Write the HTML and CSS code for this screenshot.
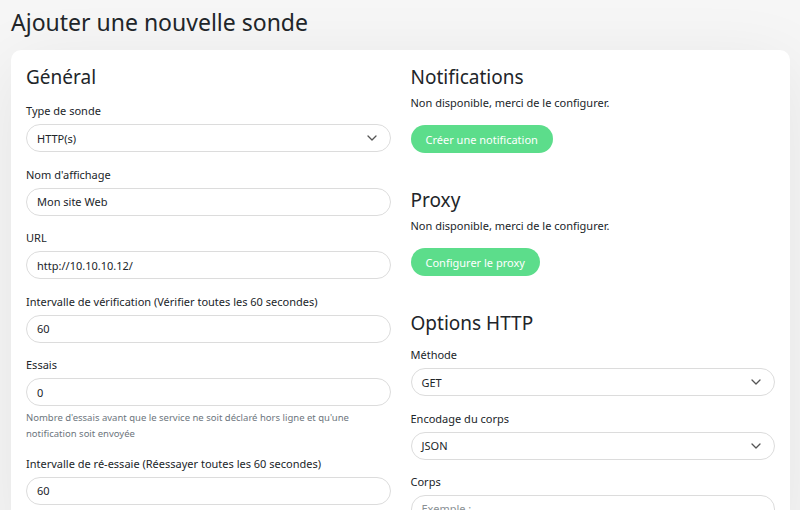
FILE: index.html
```html
<!DOCTYPE html>
<html lang="fr">
<head>
<meta charset="utf-8">
<title>Ajouter une nouvelle sonde</title>
<link rel="stylesheet" href="styles.css">
</head>
<body>
<div class="page">
  <h1 class="title">Ajouter une nouvelle sonde</h1>
  <div class="card">
    <div class="col">
      <h2 class="section">Général</h2>
      <div class="field">
        <label class="label">Type de sonde</label>
        <div class="select"><span>HTTP(s)</span><svg class="chev" width="10" height="6" viewBox="0 0 10 6"><path d="M1 1l4 4 4-4" fill="none" stroke="#555" stroke-width="1.3" stroke-linecap="round" stroke-linejoin="round"/></svg></div>
      </div>
      <div class="field">
        <label class="label">Nom d'affichage</label>
        <div class="input">Mon site Web</div>
      </div>
      <div class="field">
        <label class="label">URL</label>
        <div class="input">http://10.10.10.12/</div>
      </div>
      <div class="field">
        <label class="label">Intervalle de vérification (Vérifier toutes les 60 secondes)</label>
        <div class="input">60</div>
      </div>
      <div class="field">
        <label class="label">Essais</label>
        <div class="input">0</div>
        <div class="help">Nombre d'essais avant que le service ne soit déclaré hors ligne et qu'une notification soit envoyée</div>
      </div>
      <div class="field">
        <label class="label">Intervalle de ré-essaie (Réessayer toutes les 60 secondes)</label>
        <div class="input">60</div>
      </div>
    </div>
    <div class="col">
      <h2 class="section tight">Notifications</h2>
      <p class="note">Non disponible, merci de le configurer.</p>
      <button class="btn">Créer une notification</button>
      <h2 class="section spaced">Proxy</h2>
      <p class="note">Non disponible, merci de le configurer.</p>
      <button class="btn">Configurer le proxy</button>
      <h2 class="section spaced last">Options HTTP</h2>
      <div class="field">
        <label class="label">Méthode</label>
        <div class="select"><span>GET</span><svg class="chev" width="10" height="6" viewBox="0 0 10 6"><path d="M1 1l4 4 4-4" fill="none" stroke="#555" stroke-width="1.3" stroke-linecap="round" stroke-linejoin="round"/></svg></div>
      </div>
      <div class="field">
        <label class="label">Encodage du corps</label>
        <div class="select"><span>JSON</span><svg class="chev" width="10" height="6" viewBox="0 0 10 6"><path d="M1 1l4 4 4-4" fill="none" stroke="#555" stroke-width="1.3" stroke-linecap="round" stroke-linejoin="round"/></svg></div>
      </div>
      <div class="field">
        <label class="label">Corps</label>
        <div class="textarea">Exemple :</div>
      </div>
    </div>
  </div>
</div>
</body>
</html>
```

FILE: styles.css
```css
* { box-sizing: border-box; }
html, body { margin: 0; padding: 0; }
body {
  background: #f6f6f6;
  font-family: "Noto Sans", "Open Sans", sans-serif;
  color: #212529;
  overflow: hidden;
  height: 510px;
}
.page {
  padding: 0 10px 0 11px;
}
.title {
  margin: 8px 0 13px;
  font-size: 23px;
  line-height: 29px;
  font-weight: 400;
  color: #212529;
}
.card {
  background: #fff;
  border-radius: 10px;
  box-shadow: 0 15px 70px rgba(0, 0, 0, 0.08);
  padding: 15px 15px 0;
  display: grid;
  grid-template-columns: 1fr 1fr;
  column-gap: 20px;
  height: 490px;
  overflow: hidden;
}
.section {
  margin: 0 0 13px;
  font-size: 19px;
  line-height: 24px;
  font-weight: 400;
}
.section.tight { margin-bottom: 5px; }
.section.spaced { margin-top: 35px; margin-bottom: 5px; }
.section.last { margin-bottom: 11px; }
.field { margin-bottom: 13.5px; }
.label {
  display: block;
  font-size: 11px;
  line-height: 18px;
  margin-bottom: 4px;
  color: #212529;
}
.input, .select, .textarea {
  height: 28px;
  border: 1px solid #dcdcdc;
  border-radius: 14px;
  padding: 0 10px;
  font-size: 11px;
  display: flex;
  align-items: center;
  color: #212529;
  background: #fff;
}
.select { justify-content: space-between; padding-right: 13px; }
.chev { flex: none; }
.textarea {
  align-items: flex-start;
  padding-top: 5px;
  color: #8a8f94;
  height: 60px;
}
.help {
  margin-top: 4px;
  margin-bottom: -1px;
  font-size: 9.5px;
  line-height: 16px;
  color: #6c757d;
}
.note {
  margin: 5px 0 13px;
  font-size: 11px;
  line-height: 18px;
}
.btn {
  display: block;
  height: 28px;
  border: none;
  border-radius: 14px;
  background: #5cdd8b;
  color: #fff;
  font-family: inherit;
  font-size: 11px;
  padding: 0 15px;
}
```
